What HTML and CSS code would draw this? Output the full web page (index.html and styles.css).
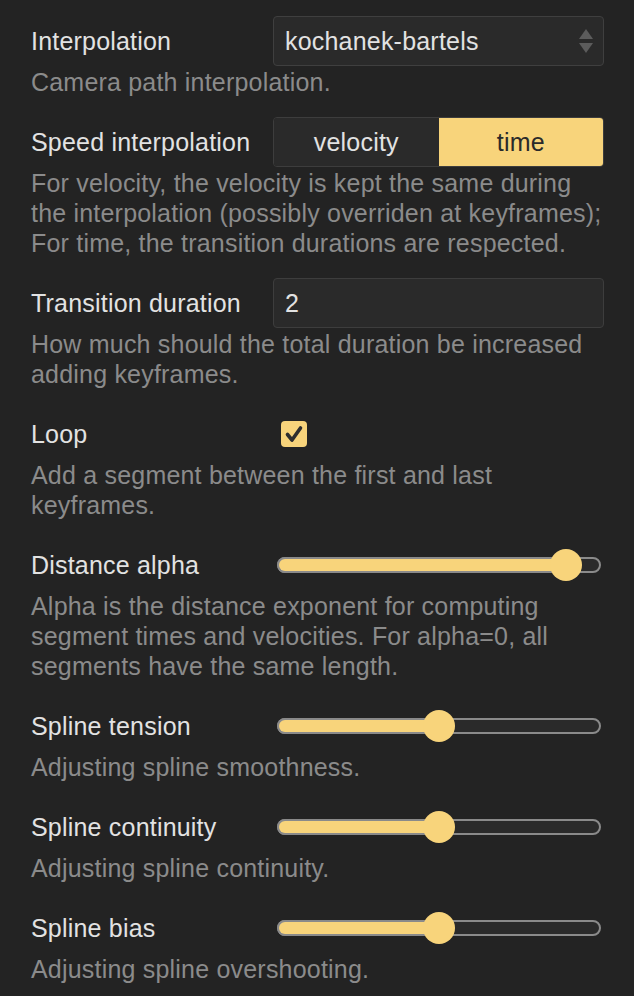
FILE: index.html
```html
<!DOCTYPE html>
<html lang="en">
<head>
<meta charset="utf-8">
<title>Camera path settings</title>
<link rel="stylesheet" href="styles.css">
</head>
<body>
<div class="panel">
  <div class="item">
    <div class="row">
      <div class="label">Interpolation</div>
      <div class="control select">
        <span class="select-value">kochanek-bartels</span>
        <svg class="select-arrows" width="16" height="32" viewBox="0 0 16 32" aria-hidden="true">
          <path d="M8 4 L15 14 L1 14 Z" fill="#5c5c5c"/>
          <path d="M1 18 L15 18 L8 28 Z" fill="#5c5c5c"/>
        </svg>
      </div>
    </div>
    <div class="desc">Camera path interpolation.</div>
  </div>

  <div class="item">
    <div class="row">
      <div class="label">Speed interpolation</div>
      <div class="control toggle">
        <div class="toggle-opt">velocity</div>
        <div class="toggle-opt active">time</div>
      </div>
    </div>
    <div class="desc">For velocity, the velocity is kept the same during<br>the interpolation (possibly overriden at keyframes);<br>For time, the transition durations are respected.</div>
  </div>

  <div class="item">
    <div class="row">
      <div class="label">Transition duration</div>
      <div class="control input">2</div>
    </div>
    <div class="desc">How much should the total duration be increased<br>adding keyframes.</div>
  </div>

  <div class="item">
    <div class="row">
      <div class="label">Loop</div>
      <div class="control check-wrap">
        <div class="checkbox">
          <svg width="26" height="26" viewBox="0 0 26 26" aria-hidden="true">
            <path d="M6.5 13.5 L11 19 L19.5 7" fill="none" stroke="#2e2e2e" stroke-width="3.6" stroke-linecap="round" stroke-linejoin="round"/>
          </svg>
        </div>
      </div>
    </div>
    <div class="desc">Add a segment between the first and last<br>keyframes.</div>
  </div>

  <div class="item">
    <div class="row">
      <div class="label">Distance alpha</div>
      <div class="control slider">
        <div class="track">
          <div class="fill" style="width: calc(16px + 0.935 * (100% - 28px))"></div>
          <div class="thumb" style="left: calc(0.935 * (100% - 28px))"></div>
        </div>
      </div>
    </div>
    <div class="desc">Alpha is the distance exponent for computing<br>segment times and velocities. For alpha=0, all<br>segments have the same length.</div>
  </div>

  <div class="item">
    <div class="row">
      <div class="label">Spline tension</div>
      <div class="control slider">
        <div class="track">
          <div class="fill" style="width: calc(16px + 0.5 * (100% - 28px))"></div>
          <div class="thumb" style="left: calc(0.5 * (100% - 28px))"></div>
        </div>
      </div>
    </div>
    <div class="desc">Adjusting spline smoothness.</div>
  </div>

  <div class="item">
    <div class="row">
      <div class="label">Spline continuity</div>
      <div class="control slider">
        <div class="track">
          <div class="fill" style="width: calc(16px + 0.5 * (100% - 28px))"></div>
          <div class="thumb" style="left: calc(0.5 * (100% - 28px))"></div>
        </div>
      </div>
    </div>
    <div class="desc">Adjusting spline continuity.</div>
  </div>

  <div class="item">
    <div class="row">
      <div class="label">Spline bias</div>
      <div class="control slider">
        <div class="track">
          <div class="fill" style="width: calc(16px + 0.5 * (100% - 28px))"></div>
          <div class="thumb" style="left: calc(0.5 * (100% - 28px))"></div>
        </div>
      </div>
    </div>
    <div class="desc">Adjusting spline overshooting.</div>
  </div>
</div>
</body>
</html>
```

FILE: styles.css
```css
html, body {
  margin: 0;
  padding: 0;
  background: #232323;
}

body {
  font-family: "Liberation Sans", Arial, Helvetica, sans-serif;
  font-size: 25px;
  letter-spacing: 0.2px;
  color: #e2e2e2;
}

.panel {
  display: flex;
  flex-direction: column;
  gap: 20px;
  padding: 16px 30px 0 31px;
}

.row {
  display: flex;
  align-items: center;
  height: 50px;
}

.label {
  width: 242px;
  flex: none;
  color: #e2e2e2;
  padding-top: 1px;
}

.control {
  flex: 1;
  height: 50px;
  box-sizing: border-box;
}

.desc {
  margin-top: 1px;
  line-height: 30px;
  color: #8b8b8b;
  white-space: nowrap;
}

/* select */
.select {
  display: flex;
  align-items: center;
  justify-content: space-between;
  background: #2a2a2a;
  border: 1px solid #3f3f3f;
  border-radius: 4px;
  padding: 0 9px 0 11px;
}

.select-value {
  color: #e2e2e2;
}

.select-arrows {
  display: block;
}

/* toggle */
.toggle {
  display: flex;
  border: 1px solid #3d3d3d;
  border-radius: 4px;
  overflow: hidden;
}

.toggle-opt {
  flex: 1;
  display: flex;
  align-items: center;
  justify-content: center;
  background: #2a2a2a;
  color: #e2e2e2;
}

.toggle-opt.active {
  background: #f8d47b;
  color: #2a2a2a;
}

/* input */
.input {
  display: flex;
  align-items: center;
  background: #2a2a2a;
  border: 1px solid #3d3d3d;
  border-radius: 4px;
  padding: 0 11px;
  color: #e2e2e2;
}

/* checkbox */
.check-wrap {
  display: flex;
  align-items: center;
  padding-left: 8px;
}

.checkbox {
  width: 26px;
  height: 26px;
  border-radius: 4px;
  background: #f8d47b;
}

.checkbox svg {
  display: block;
}

/* slider */
.slider {
  display: flex;
  align-items: center;
  padding: 0 3px 0 4px;
}

.track {
  position: relative;
  flex: 1;
  height: 16px;
  box-sizing: border-box;
  border: 2px solid #8a8a8a;
  border-radius: 8px;
  background: #2a2a2a;
}

.fill {
  position: absolute;
  left: -2px;
  top: -2px;
  bottom: -2px;
  background: #f8d47b;
  border: 2px solid #8a8a8a;
  border-right: none;
  border-radius: 8px 0 0 8px;
  box-sizing: border-box;
}

.thumb {
  position: absolute;
  top: 50%;
  width: 32px;
  height: 32px;
  margin-left: -2px;
  margin-top: -16px;
  border-radius: 50%;
  background: #f8d47b;
}
```
